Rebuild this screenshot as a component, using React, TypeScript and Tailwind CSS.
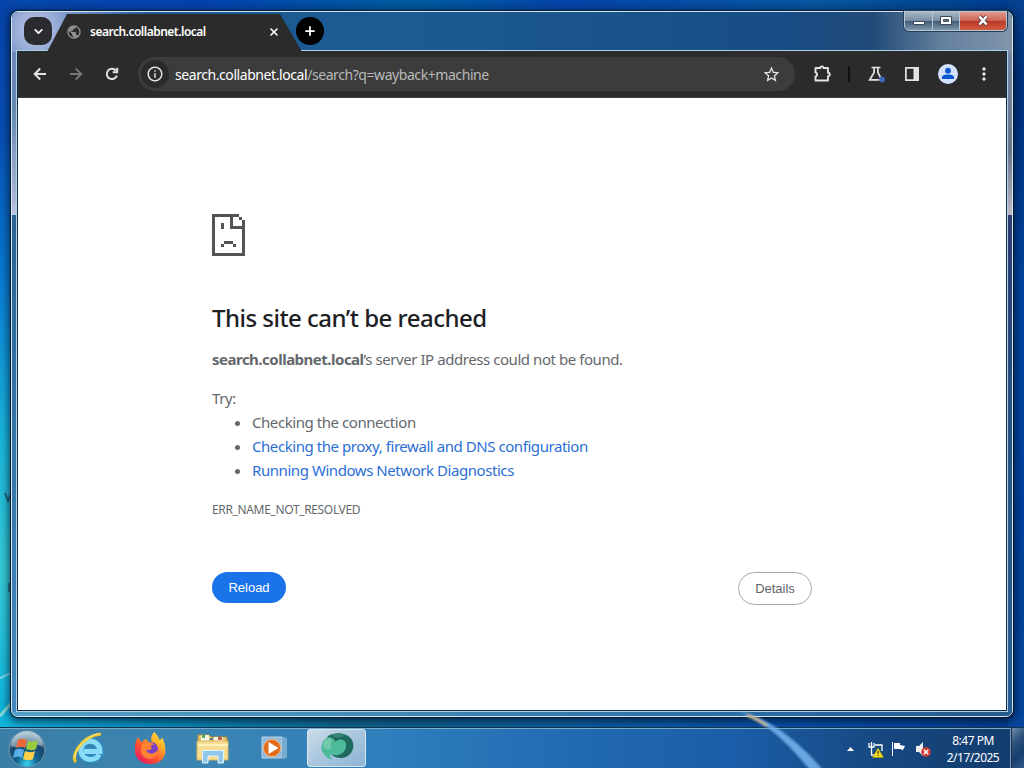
import type { ReactNode } from 'react'
import { ChevronDown, X, Plus } from 'lucide-react'
import {
  MdInfoOutline,
  MdStarBorder,
  MdMoreVert,
  MdPublic,
} from 'react-icons/md'

const SUGGESTIONS = [
  { label: 'Checking the connection', link: false },
  { label: 'Checking the proxy, firewall and DNS configuration', link: true },
  { label: 'Running Windows Network Diagnostics', link: true },
]

function Wallpaper() {
  return (
    <div className="absolute inset-0 bg-[linear-gradient(90deg,#10b5dc_0%,#0596c8_12%,#11658f_34%,#0d5ca4_60%,#0650ab_78%,#053c91_100%)]">
      <div className="absolute inset-x-0 top-0 h-6 bg-[linear-gradient(90deg,#0648ad,#0442b0_20%,#005c9e_40%,#0544aa_55%,#0756a0_80%,#003b8d)]" />
      <div className="absolute left-0 top-0 w-4 h-[700px] bg-[linear-gradient(180deg,#0644a9_0%,#074eb5_18%,#087bd3_40%,#18b5dc_62%,#35cbd6_82%,#11b7df_100%)]" />
      <div className="absolute right-0 top-0 w-4 h-[728px] bg-[linear-gradient(180deg,#06418f_0%,#00317e_12%,#00449f_40%,#00419c_70%,#06469d_100%)]" />
      <svg className="absolute inset-0" width="1024" height="768" viewBox="0 0 1024 768" fill="none">
        <path d="M0 716L13 701" stroke="#a8e9d9" strokeWidth="3" opacity=".8" />
        <path d="M0 678L13 672" stroke="#c3f6ee" strokeWidth="2" opacity=".6" />
        <path d="M5 493l3 8 3-8M9 498h3" stroke="#294c60" strokeWidth="1.5" />
        <path d="M9 583v9l3-8v9" stroke="#286679" strokeWidth="1.5" />
      </svg>
    </div>
  )
}

function WindowControls() {
  return (
    <div className="ml-auto -mt-px mr-px flex h-5 w-[103px] rounded-b-[5px] border border-[#b8c7d6] overflow-hidden shadow-[0_0_0_1px_#263d55]">
      <div className="w-7 border-r border-[#b8c7d6] flex items-center justify-center bg-[linear-gradient(180deg,#a7b7c7_0%,#788da4_48%,#405a76_52%,#7e97ae_100%)]">
        <svg width="12" height="10" viewBox="0 0 12 10"><path d="M.5 5.5h11v3H.5z" fill="#fff" stroke="#3c4856" /></svg>
      </div>
      <div className="w-[27px] border-r border-[#b8c7d6] flex items-center justify-center bg-[linear-gradient(180deg,#a7b7c7_0%,#788da4_48%,#405a76_52%,#7e97ae_100%)]">
        <svg className="-mt-0.5" width="12" height="11" viewBox="0 0 12 11">
          <path d="M.5 1.5h11v8H.5z" fill="#fff" stroke="#3c4856" />
          <path d="M3.5 4.5h5v2h-5z" fill="#687e94" stroke="#3c4856" />
        </svg>
      </div>
      <div className="flex-1 flex items-center justify-center bg-[linear-gradient(180deg,#e19a8e_0%,#ce6956_46%,#b8382a_52%,#d45c3e_100%)]">
        <svg className="-mt-0.5" width="14" height="11" viewBox="0 0 14 11">
          <path d="M3.5 1.5l7 8M10.5 1.5l-7 8" stroke="#553d40" strokeWidth="4.2" />
          <path d="M3.5 1.5l7 8M10.5 1.5l-7 8" stroke="#fff" strokeWidth="2.6" />
        </svg>
      </div>
    </div>
  )
}

function TitleBar() {
  return (
    <div className="flex items-start h-[38px] pl-[3px] shrink-0">
      <div className="mt-[5px] ml-[5px] w-7 h-7 rounded-[10px] bg-[#292b2e] flex items-center justify-center text-white">
        <ChevronDown size={13} strokeWidth={3.2} />
      </div>
      <div className="relative z-10 -ml-[5px] mt-0.5 w-[255px] h-[38px] bg-[#2b2b2b] [clip-path:polygon(20px_0,233px_0,100%_100%,0_100%)] flex items-center pl-[19px] pb-[3px] text-white">
        <MdPublic size={16} className="text-[#8e8e8e]" />
        <span className="ml-2 w-[174px] text-[12px] font-semibold tracking-[-0.5px] whitespace-nowrap">search.collabnet.local</span>
        <X size={12} strokeWidth={3.2} className="ml-1" />
      </div>
      <div className="mt-[5px] -ml-[6px] relative z-10 w-7 h-7 rounded-full bg-black text-white flex items-center justify-center">
        <Plus size={14} strokeWidth={3} />
      </div>
      <WindowControls />
    </div>
  )
}

function Toolbar() {
  return (
    <div className="flex items-center h-[47px] shrink-0 bg-[#2b2b2b] border-b border-[#3f3f3f] text-[#e3e3e3]">
      <svg className="ml-[13px]" width="18" height="18" viewBox="0 0 18 18" fill="none" stroke="#e3e3e3" strokeWidth="2">
        <path d="M15 9H4M9.200 3.500L3.700 9l5.500 5.500" />
      </svg>
      <svg className="ml-[18px]" width="18" height="18" viewBox="0 0 18 18" fill="none" stroke="#777" strokeWidth="1.800">
        <path d="M3 9h11M8.800 3.500L14.300 9l-5.500 5.500" />
      </svg>
      <svg className="ml-[18px]" width="18" height="18" viewBox="0 0 18 18" fill="none" stroke="#e3e3e3" strokeWidth="2">
        <path d="M13.900 10.600a5.200 5.200 0 1 1-.9-5" />
        <path d="M14.200 2.800v4.500H9.700" />
      </svg>
      <div className="ml-[17px] w-[657px] h-[34px] rounded-full bg-[#3c3c3c] flex items-center pl-[3px] pr-[14px]">
        <div className="w-7 h-7 rounded-full bg-[#2b2b2b] flex items-center justify-center">
          <MdInfoOutline size={18} />
        </div>
        <span className="ml-[6px] text-[14px] text-[#b9b9b9] tracking-[-0.43px] whitespace-nowrap">
          <span className="text-white">search.collabnet.local</span>/search?q=wayback+machine
        </span>
        <MdStarBorder size={19} className="ml-auto" />
      </div>
      <svg className="ml-[17px]" width="20" height="20" viewBox="0 0 20 20">
        <path d="M3.500 4h4.800a1.600 1.600 0 0 1 3.200 0H16v4.700a1.600 1.600 0 0 1 0 3.600v4.200H3.500v-4c2.200-.4 2.200-3.600 0-4z" fill="none" stroke="#e3e3e3" strokeWidth="1.900" strokeLinejoin="round" />
      </svg>
      <div className="ml-4 w-[2px] h-4 bg-[#111]" />
      <svg className="ml-[17px]" width="20" height="20" viewBox="0 0 20 20" fill="none">
        <path d="M4.500 3.500h9M7.100 3.500v5L2.700 15.800h12L10.900 8.500v-5" stroke="#e3e3e3" strokeWidth="1.700" />
        <circle cx="15" cy="15.500" r="2.900" fill="#3f68b8" />
      </svg>
      <svg className="ml-[17px]" width="16" height="16" viewBox="0 0 16 16">
        <path d="M1.900 1.900h12.200v12.200H1.900z" fill="none" stroke="#e3e3e3" strokeWidth="1.700" />
        <path d="M9.500 1H15v14H9.500z" fill="#e3e3e3" />
      </svg>
      <div className="ml-[18px] w-5 h-5 rounded-full bg-[#d3e3fd] flex items-center justify-center">
        <svg width="14" height="14" viewBox="0 0 14 14" fill="#0b57d0">
          <circle cx="7" cy="3.700" r="2.900" />
          <path d="M1 12v-1.500C1 8.200 4.500 7.600 7 7.600s6 .6 6 2.900V12z" />
        </svg>
      </div>
      <MdMoreVert size={20} className="ml-4" />
    </div>
  )
}

function SadPage() {
  return (
    <svg width="33" height="42" viewBox="0 0 11 14" fill="#535353" shapeRendering="crispEdges">
      <path d="M0 0h9v1H7v3h3V2h1v12H0zM1 1v12h9V5H6V1zM9 1h1v1H9zM3 3h1v2H3zM4 9h3v1H4zM3 10h1v1H3zM7 10h1v1H7z" fillRule="evenodd" />
    </svg>
  )
}

function ErrorPage() {
  return (
    <main className="flex-1 bg-white pl-[194px] pt-[116px] text-[15px] leading-6 text-[#64686c]">
      <div className="w-[600px]">
        <SadPage />
        <h1 className="mt-[45px] text-[24px] leading-[34px] font-medium tracking-[-0.52px] text-[#202124]">This site can’t be reached</h1>
        <p className="mt-3 tracking-[-0.44px]">
          <b className="font-bold tracking-[-0.5px]">search.collabnet.local</b>’s server IP address could not be found.
        </p>
        <p className="mt-[15px] tracking-[-0.4px]">Try:</p>
        <ul className="list-disc pl-10 tracking-[-0.44px]">
          {SUGGESTIONS.map(item => (
            <li key={item.label}>
              {item.link ? <a className="text-[#2b6fd6]">{item.label}</a> : item.label}
            </li>
          ))}
        </ul>
        <p className="mt-[16px] text-[12px] tracking-[-0.35px]">ERR_NAME_NOT_RESOLVED</p>
        <div className="mt-[50px] flex items-start justify-between font-['Liberation_Sans',sans-serif] text-[13px]">
          <button className="w-[74px] h-[31px] rounded-full bg-[#1a73e8] text-white">Reload</button>
          <button className="w-[74px] h-[33px] rounded-full border border-[#a5a8ac] text-[#5f6368]">Details</button>
        </div>
      </div>
    </main>
  )
}

function StartOrb() {
  return (
    <svg className="mt-0.5" width="38" height="38" viewBox="0 0 38 38">
      <defs>
        <radialGradient id="orb" cx="50%" cy="92%" r="85%">
          <stop offset="0" stopColor="#35d6f4" />
          <stop offset=".35" stopColor="#11648f" />
          <stop offset=".7" stopColor="#1b476c" />
          <stop offset="1" stopColor="#91b0c2" />
        </radialGradient>
      </defs>
      <circle cx="19" cy="19" r="18" fill="url(#orb)" stroke="#7295aa" />
      <path d="M3 16a16 15 0 0 1 32 0c-9-3-21 4-32 0z" fill="#d9e7ee" opacity=".45" />
      <path d="M10 10c3-2 6-1 9 0l-2 8c-3-2-6-2-9 0z" fill="#ee6835" />
      <path d="M20 11c3 1 6 1 10-1l-2 9c-4 2-7 1-10 0z" fill="#9acb3d" />
      <path d="M7 20c3-2 6-1 9 0l-2 8c-3-2-6-2-9 0z" fill="#5cacea" />
      <path d="M17 21c3 1 6 2 10 0l-2 8c-4 2-7 1-10 0z" fill="#ffd047" />
    </svg>
  )
}

function ExplorerE() {
  return (
    <svg width="34" height="34" viewBox="0 0 34 34" fill="none">
      <path d="M27 23.500c-3 7.500-18 7-18-4.500 0-12 19-12 19 1.500H12" stroke="#2a91cc" strokeWidth="7" />
      <path d="M27 23.500c-3 7.500-18 7-18-4.500 0-12 19-12 19 1.500H12" stroke="#8adcf7" strokeWidth="5" />
      <path d="M4 31C-2 26 9 5 29 3" stroke="#e8c52f" strokeWidth="3.200" />
      <path d="M3 27C2 20 14 5 27 2.500" stroke="#fff199" strokeWidth="1" />
    </svg>
  )
}

function Firefox() {
  return (
    <svg width="32" height="34" viewBox="0 0 32 34">
      <defs>
        <linearGradient id="fox" x1="1" y1="0" x2=".2" y2="1">
          <stop stopColor="#fff14b" />
          <stop offset=".35" stopColor="#ffad29" />
          <stop offset=".65" stopColor="#ff552f" />
          <stop offset="1" stopColor="#e71666" />
        </linearGradient>
      </defs>
      <path d="M19 1c5 4 5 8 6 8 2-1 2-3 2-3 6 12 5 26-11 27C-2 33-3 16 3 6l3 5 5-3c1 2 3 3 6 4-2-5 0-8 2-11z" fill="url(#fox)" />
      <circle cx="16" cy="18" r="7" fill="#7941c7" />
      <path d="M7 13c5-4 11-1 13 1-5-1-5 2-3 3-3 4-6 1-6 1 1 6 9 6 11 1 2 11-15 12-16 1z" fill="#ff8132" />
    </svg>
  )
}

function Folder() {
  return (
    <svg width="34" height="32" viewBox="0 0 34 32">
      <path d="M2 3h11l2 2h16v22H2z" fill="#e5c76d" stroke="#b58c36" />
      <path d="M5 3h8v6H5zM18 5h9v4h-9z" fill="#f9f7e7" />
      <path d="M6 3h3v3H6z" fill="#54a652" />
      <path d="M14 6h3v2h-3z" fill="#497cae" />
      <path d="M22 5h4v3h-4z" fill="#c75c44" />
      <path d="M1 9h31v19H1z" fill="#f7dd91" stroke="#d6b35b" />
      <path d="M2 13h30" stroke="#fff2bc" strokeWidth="2" />
      <path d="M6.500 31V18.500h21V31H22v-7H12v7z" fill="#8fc8e8" stroke="#e2f5ff" />
    </svg>
  )
}

function MediaPlayer() {
  return (
    <svg className="-ml-px" width="26" height="24" viewBox="0 0 26 24">
      <path d="M1 1h20v21H1z" fill="#92b9d9" stroke="#b8d4e8" />
      <path d="M23 1v22M25 2v20" stroke="#b8d4e8" />
      <circle cx="11" cy="12" r="8.600" fill="#e36c1b" stroke="#f8b779" />
      <path d="M7.500 6l10 6-10 6z" fill="#fff" />
    </svg>
  )
}

function GreenGlobe() {
  return (
    <svg className="-mt-0.5" width="34" height="30" viewBox="0 0 34 30">
      <path d="M8 4C16-1 28 1 32 8c4 8-1 17-10 18C11 27 2 14 8 4z" fill="#1f6a5f" />
      <path d="M2 12C4 6 9 4 12 6c2 1 3 2 3 4 4-4 10-3 11 2 1 7-5 12-12 11-2 0-3-1-4-1 0 2 1 4 2 6C6 26-1 19 2 12z" fill="#4dba9a" />
      <path d="M3 12C5 6 10 5 12 8c-2 3-2 6 0 9-4 1-9 0-9-5z" fill="#74c9ad" />
      <path d="M10 4c5-3 12-3 16 0-4 0-5 2-9 2-2-1-4-2-7-2z" fill="#388472" />
    </svg>
  )
}

function TaskButton({ active, children }: { active?: boolean; children: ReactNode }) {
  return (
    <div
      className={`w-[59px] mr-[3px] h-[38px] flex items-center justify-center ${
        active ? 'border border-[#d5e7f2] rounded-[3px] bg-[linear-gradient(145deg,#cbdce9_0%,#a9c6dd_48%,#8db4d5_100%)]' : ''
      }`}
    >
      {children}
    </div>
  )
}

function Tray() {
  return (
    <div className="ml-auto flex items-center h-full text-white">
      <svg className="mt-0.5" width="7" height="4" viewBox="0 0 7 4" fill="#fff"><path d="M0 4l3.500-4L7 4z" /></svg>
      <svg className="mt-[3px] ml-[14px]" width="16" height="16" viewBox="0 0 16 16" fill="none">
        <path d="M1 1v4h5V1M3.500 0v5M3.500 5v8h4M7 3h7v6" stroke="#fff" strokeWidth="1.300" />
        <path d="M10 6l5.500 9.500h-11z" fill="#f7df25" stroke="#a79316" strokeWidth=".7" />
        <path d="M10 9v3M10 13v1" stroke="#443f11" strokeWidth="1.200" />
      </svg>
      <svg className="ml-[7px]" width="15" height="15" viewBox="0 0 15 15" fill="#fff">
        <path d="M1 1h1v14H1zM3 2h6v6H3zM9 4l5 1-2 4-3-1z" />
      </svg>
      <svg className="mt-0.5 ml-[9px]" width="17" height="16" viewBox="0 0 17 16">
        <path d="M1 5h3l4-4v14l-4-4H1z" fill="#eee" />
        <circle cx="11" cy="11" r="4.800" fill="#d43b30" />
        <path d="M8.800 8.800l4.400 4.400M13.200 8.800l-4.400 4.400" stroke="#fff" strokeWidth="1.500" />
      </svg>
      <div className="mt-0.5 ml-[9px] w-[64px] text-center text-[12px] leading-[17px] tracking-[-0.5px]">
        <div>8:47 PM</div>
        <div>2/17/2025</div>
      </div>
      <div className="ml-[5px] w-[14px] h-full border-l border-[#7b9ab9] bg-[linear-gradient(135deg,#7290ad_0%,#2c527b_35%,#163f6f_65%,#315b87_100%)] shadow-[inset_1px_0_#162e50]" />
    </div>
  )
}

export default function App() {
  return (
    <div className="relative w-[1024px] h-[768px] overflow-hidden flex flex-col font-['Noto_Sans','Open_Sans',sans-serif]">
      <Wallpaper />
      <div className="relative mt-[11px] ml-[11px] w-[1002px] h-[706px] shrink-0 flex flex-col rounded-[7px] border border-[#d2e9f5] shadow-[0_0_0_1px_#071c32,0_2px_8px_2px_rgba(0,15,35,0.75)] bg-[linear-gradient(180deg,#1c568e_0%,#2b6597_30%,#438abd_100%)]">
        {/* Aero glass reflections */}
        <div className="absolute inset-0 rounded-[6px] overflow-hidden">
          <div className="absolute inset-x-0 top-0 h-10 bg-[radial-gradient(circle_at_24px_18px,#c5cce9_0,#7895c9_36px,transparent_115px),linear-gradient(90deg,#1c5796,#1b5b92_40%,#184c84_78%,#214a78_86%,#64809d_93%,#8195ab)]" />
          <div className="absolute left-0 top-10 w-1 h-[163px] bg-[linear-gradient(180deg,#6e87bc,#6689b1_35%,#a8b6d6_90%,#bbc8de)]" />
          <div className="absolute right-0 top-10 w-1 h-[163px] bg-[linear-gradient(180deg,#7589a6,#68768d_60%,#bbb9c4)]" />
          <div className="absolute right-0 top-[203px] bottom-0 w-1 bg-[linear-gradient(180deg,#2c3b70,#275382_40%,#2a5f94)]" />
          <div className="absolute inset-x-0 bottom-0 h-1 bg-[linear-gradient(90deg,#529fc7,#438bb3_35%,#2d71ab_65%,#255a8d)]" />
        </div>
        <div className="relative h-full flex flex-col px-1 pb-1">
          <TitleBar />
          <div className="flex-1 min-h-0 flex flex-col border border-[#a9d2e9]">
            <div className="flex-1 min-h-0 flex flex-col border border-t-0 border-[#172b42]">
              <Toolbar />
              <ErrorPage />
            </div>
          </div>
        </div>
      </div>
      <div className="relative mt-auto h-[41px] shrink-0 flex items-center border-t border-[#12324d] shadow-[inset_0_1px_#78aeca] pl-2 bg-[linear-gradient(90deg,#3b7ea6_0%,#3b85b3_20%,#2f7fbd_37%,#2068b0_58%,#1b5da8_72%,#164880_86%,#123b6c_100%)]">
        <svg className="absolute left-[735px] top-[-16px] blur-[1px]" width="90" height="57" viewBox="0 0 90 57">
          <path d="M4 0C24 2 58 22 87 57H74C54 32 30 9 4 0z" fill="#79b5ee" opacity=".85" />
          <path d="M12 3q12 5 20 11" fill="none" stroke="#c9b49a" strokeWidth="3" />
        </svg>
        <StartOrb />
        <div className="ml-[13px] flex items-center">
          <TaskButton><ExplorerE /></TaskButton>
          <TaskButton><Firefox /></TaskButton>
          <TaskButton><Folder /></TaskButton>
          <TaskButton><MediaPlayer /></TaskButton>
          <TaskButton active><GreenGlobe /></TaskButton>
        </div>
        <Tray />
      </div>
    </div>
  )
}
